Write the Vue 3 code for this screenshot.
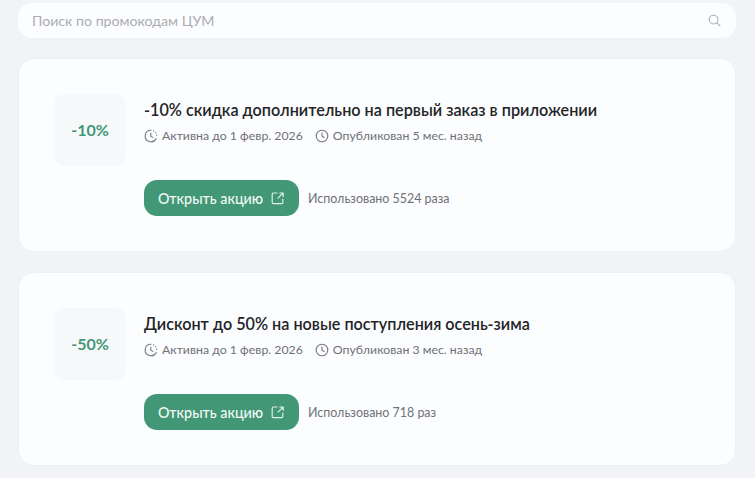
<script setup>
const promos = [
  { badge: '-10%', title: '-10% скидка дополнительно на первый заказ в приложении', published: 'Опубликован 5 мес. назад', used: 'Использовано 5524 раза' },
  { badge: '-50%', title: 'Дисконт до 50% на новые поступления осень-зима', published: 'Опубликован 3 мес. назад', used: 'Использовано 718 раз' },
]
</script>

<template>
  <div class="page">
    <div class="search">
      <span class="placeholder">Поиск по промокодам ЦУМ</span>
      <svg class="search-icon" width="13" height="13" viewBox="0 0 13 13" fill="none" stroke="#b0b2b7" stroke-width="1.1" stroke-linecap="round">
        <circle cx="5.6" cy="5.6" r="4.4" />
        <path d="M9 9l3 2.8" />
      </svg>
    </div>
    <div v-for="p in promos" :key="p.badge" class="card">
      <div class="badge">{{ p.badge }}</div>
      <div class="body">
        <div class="title">{{ p.title }}</div>
        <div class="meta">
          <span class="meta-item">
            <svg width="14" height="14" viewBox="0 0 14 14" fill="none" stroke="#77797f" stroke-width="1.1" stroke-linecap="round">
              <path d="M7 1.2A5.8 5.8 0 1 0 12.2 9.6" />
              <path d="M6.8 4v3.2l2 1.2" />
              <path d="M9.6 1.9h.01M11.6 3.6h.01M12.7 6h.01" stroke-width="1.3" />
            </svg>
            Активна до 1 февр. 2026
          </span>
          <span class="meta-item">
            <svg width="14" height="14" viewBox="0 0 14 14" fill="none" stroke="#77797f" stroke-width="1.1" stroke-linecap="round">
              <circle cx="7" cy="7" r="5.8" />
              <path d="M7 3.8v3.4l2.1 1.2" />
            </svg>
            {{ p.published }}
          </span>
        </div>
        <div class="actions">
          <button class="open">
            Открыть акцию
            <svg width="14" height="14" viewBox="0 0 14 14" fill="none" stroke="#e4f0eb" stroke-width="1.15" stroke-linecap="round" stroke-linejoin="round">
              <path d="M6 2H2.4a1.2 1.2 0 0 0-1.2 1.2v8.2a1.2 1.2 0 0 0 1.2 1.2h8.2a1.2 1.2 0 0 0 1.2-1.2V8" />
              <path d="M8.8 2h3.4v3.4M12 2.2L7 7.2" />
            </svg>
          </button>
          <span class="used">{{ p.used }}</span>
        </div>
      </div>
    </div>
  </div>
</template>

<style>
html, body { margin: 0; background: #f2f3f6; overflow: hidden; }
</style>

<style scoped>
.page {
  box-sizing: border-box;
  width: 755px;
  height: 478px;
  padding: 3px 19px 0 18px;
  display: flex;
  flex-direction: column;
  gap: 20px;
  background: #f2f3f6;
  font-family: Lato, "Noto Sans", sans-serif;
  overflow: hidden;
}
.search {
  box-sizing: border-box;
  height: 35px;
  padding: 0 14px;
  display: flex;
  align-items: center;
  justify-content: space-between;
  background: #fcfdfe;
  border-radius: 14px;
}
.placeholder { font-size: 14.15px; color: #abadb2; }
.search-icon { margin-right: 1px; }
.card {
  box-sizing: border-box;
  height: 194px;
  padding: 35px;
  display: flex;
  gap: 18px;
  background: #fcfdfe;
  border: 1px solid #eef0f3;
  border-radius: 16px;
  flex-shrink: 0;
}
.badge {
  box-sizing: border-box;
  width: 72px;
  height: 72px;
  padding-bottom: 2px;
  display: flex;
  align-items: center;
  justify-content: center;
  background: #f7f8fa;
  border-radius: 10px;
  font-size: 16px;
  font-weight: 700;
  color: #429876;
}
.body { display: flex; flex-direction: column; padding-top: 5px; }
.title { font-size: 16.2px; font-weight: 600; line-height: 22px; color: #232427; }
.meta { display: flex; gap: 12px; margin-top: 7px; font-size: 12.3px; line-height: 16px; color: #6f7177; }
.meta-item { display: flex; align-items: center; gap: 4px; }
.actions { display: flex; align-items: center; gap: 9px; margin-top: 36px; }
.open {
  box-sizing: border-box;
  width: 155px;
  height: 36px;
  padding: 0;
  display: flex;
  align-items: center;
  justify-content: center;
  gap: 8px;
  background: #429876;
  border: 0;
  border-radius: 13px;
  font-family: inherit;
  font-size: 14.3px;
  font-weight: 500;
  color: #f4f9f7;
}
.used { font-size: 12.45px; color: #6f7177; }
</style>
